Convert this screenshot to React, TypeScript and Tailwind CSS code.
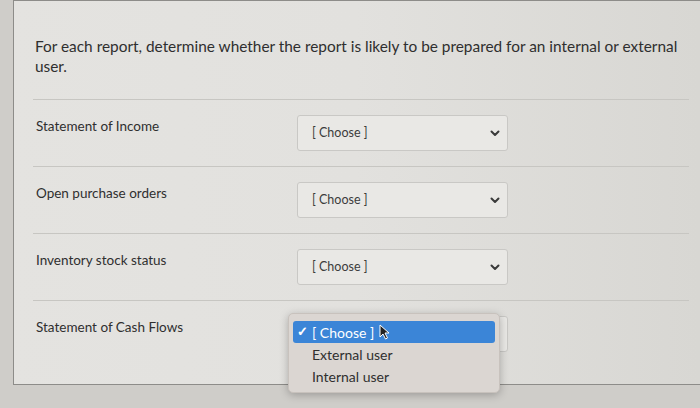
import React from "react";

const rows = [
  "Statement of Income",
  "Open purchase orders",
  "Inventory stock status",
  "Statement of Cash Flows",
];

function Chevron() {
  return (
    <svg width="10" height="7" viewBox="0 0 10 7" className="shrink-0">
      <path d="M1.5 1.5 L5 5 L8.5 1.5" fill="none" stroke="#3a3a3a" strokeWidth="2" strokeLinecap="round" strokeLinejoin="round" />
    </svg>
  );
}

function Select() {
  return (
    <div className="w-[211px] h-[36px] border border-[#c9c8c5] rounded-[3px] bg-[#e9e8e5] flex items-center justify-between pl-[14px] pr-[7px]">
      <span className="text-[12.5px] text-[#3c3c3c]">[ Choose ]</span>
      <Chevron />
    </div>
  );
}

export default function App() {
  return (
    <div
      className="w-[700px] h-[408px] overflow-hidden bg-[#cfcdc9] pl-[13px]"
      style={{ fontFamily: "Lato, 'Open Sans', sans-serif" }}
    >
      <div className="h-[385px] border-l border-b border-t border-[#8d8c89] bg-gradient-to-r from-[#e4e3e0] via-[#e2e1de] to-[#d8d7d3] text-[#333]">
        <div className="pl-[21px] pr-[4px] pt-[35px] h-[98px]">
          <p className="text-[15.4px] leading-[20px] whitespace-nowrap text-[#2f2f2f]">
            For each report, determine whether the report is likely to be prepared for an internal or external
            <br />
            user.
          </p>
        </div>
        <div className="ml-[19px] w-[656px] h-px bg-[#c7c6c2]" />
        {rows.map((r, i) => (
          <div key={r}>
            <div className="relative flex h-[66px] pl-[22px]">
              <div className="w-[261px] pt-[16px] text-[13.5px] text-[#2f2f2f]">{r}</div>
              <div className="pt-[15px]">
                <Select />
              </div>
              {i === 3 && (
                <div className="absolute left-[274px] top-[12px] w-[212px] h-[80px] rounded-[5px] bg-[#dbd6d2] shadow-[0_2px_8px_rgba(0,0,0,0.25)] border border-[#c8c2bd] px-[4px] pt-[7px] flex flex-col">
                  <div className="h-[22px] rounded-[3px] bg-[#3b85d7] text-white text-[14px] flex items-center pl-[4px] gap-[4px]">
                    <span className="text-[13px] font-bold">✓</span>
                    <span>[ Choose ]</span>
                    <svg width="12" height="16" viewBox="0 0 12 16" className="ml-[1px]">
                      <path d="M1 1 L1 13 L4 10 L6.5 15 L8.5 14 L6 9 L10 9 Z" fill="#222" stroke="#fff" strokeWidth="1" />
                    </svg>
                  </div>
                  <div className="h-[22px] text-[14px] text-[#2f2f2f] flex items-center pl-[19px]">External user</div>
                  <div className="h-[22px] text-[14px] text-[#2f2f2f] flex items-center pl-[19px]">Internal user</div>
                </div>
              )}
            </div>
            {i < 3 && <div className="ml-[19px] w-[656px] h-px bg-[#c7c6c2]" />}
          </div>
        ))}
      </div>
    </div>
  );
}
